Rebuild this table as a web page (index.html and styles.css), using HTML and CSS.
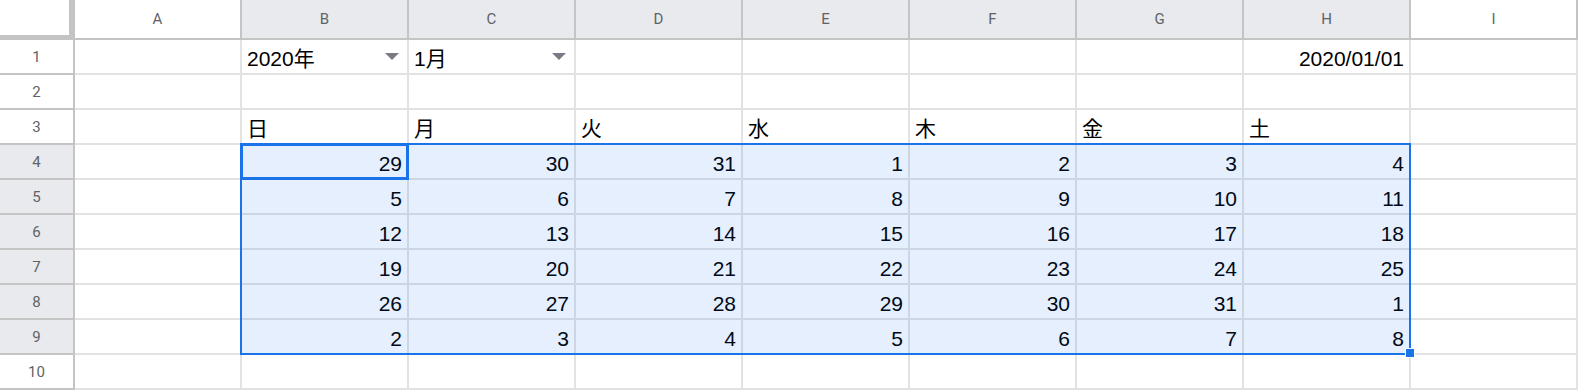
FILE: index.html
```html
<!DOCTYPE html>
<html lang="ja">
<head>
<meta charset="utf-8">
<title>Calendar sheet</title>
<link rel="stylesheet" href="styles.css">
</head>
<body>
<div class="sheet">
  <div class="corner"></div>
  <div class="ch">A</div>
  <div class="ch sel">B</div>
  <div class="ch sel">C</div>
  <div class="ch sel">D</div>
  <div class="ch sel">E</div>
  <div class="ch sel">F</div>
  <div class="ch sel">G</div>
  <div class="ch sel">H</div>
  <div class="ch">I</div>

  <div class="rh">1</div>
  <div class="c"></div>
  <div class="c dd"><span>2020年</span><i class="arrow"></i></div>
  <div class="c dd"><span>1月</span><i class="arrow"></i></div>
  <div class="c"></div>
  <div class="c"></div>
  <div class="c"></div>
  <div class="c"></div>
  <div class="c num">2020/01/01</div>
  <div class="c"></div>

  <div class="rh">2</div>
  <div class="c"></div><div class="c"></div><div class="c"></div><div class="c"></div><div class="c"></div><div class="c"></div><div class="c"></div><div class="c"></div><div class="c"></div>

  <div class="rh">3</div>
  <div class="c"></div>
  <div class="c">日</div>
  <div class="c">月</div>
  <div class="c">火</div>
  <div class="c">水</div>
  <div class="c">木</div>
  <div class="c">金</div>
  <div class="c">土</div>
  <div class="c"></div>

  <div class="rh sel">4</div>
  <div class="c"></div>
  <div class="c num">29</div><div class="c num">30</div><div class="c num">31</div><div class="c num">1</div><div class="c num">2</div><div class="c num">3</div><div class="c num">4</div>
  <div class="c"></div>

  <div class="rh sel">5</div>
  <div class="c"></div>
  <div class="c num">5</div><div class="c num">6</div><div class="c num">7</div><div class="c num">8</div><div class="c num">9</div><div class="c num">10</div><div class="c num">11</div>
  <div class="c"></div>

  <div class="rh sel">6</div>
  <div class="c"></div>
  <div class="c num">12</div><div class="c num">13</div><div class="c num">14</div><div class="c num">15</div><div class="c num">16</div><div class="c num">17</div><div class="c num">18</div>
  <div class="c"></div>

  <div class="rh sel">7</div>
  <div class="c"></div>
  <div class="c num">19</div><div class="c num">20</div><div class="c num">21</div><div class="c num">22</div><div class="c num">23</div><div class="c num">24</div><div class="c num">25</div>
  <div class="c"></div>

  <div class="rh sel">8</div>
  <div class="c"></div>
  <div class="c num">26</div><div class="c num">27</div><div class="c num">28</div><div class="c num">29</div><div class="c num">30</div><div class="c num">31</div><div class="c num">1</div>
  <div class="c"></div>

  <div class="rh sel">9</div>
  <div class="c"></div>
  <div class="c num">2</div><div class="c num">3</div><div class="c num">4</div><div class="c num">5</div><div class="c num">6</div><div class="c num">7</div><div class="c num">8</div>
  <div class="c"></div>

  <div class="rh">10</div>
  <div class="c"></div><div class="c"></div><div class="c"></div><div class="c"></div><div class="c"></div><div class="c"></div><div class="c"></div><div class="c"></div><div class="c"></div>

  <div class="range"></div>
  <div class="active"></div>
  <div class="handle"></div>
</div>
</body>
</html>
```

FILE: styles.css
```css
* { box-sizing: border-box; }

html, body {
  margin: 0;
  padding: 0;
  background: #ffffff;
  overflow: hidden;
}

.sheet {
  position: relative;
  display: grid;
  grid-template-columns: 75px repeat(9, 167px);
  grid-template-rows: 40px repeat(10, 35px);
  font-family: "Liberation Sans", "Noto Sans CJK JP", sans-serif;
  font-size: 21px;
  color: #000000;
}

.corner {
  background: #ffffff;
  border-right: 6px solid #c4c4c4;
  border-bottom: 5px solid #c4c4c4;
}

.ch {
  display: flex;
  align-items: center;
  justify-content: center;
  font-family: Roboto, "Liberation Sans", sans-serif;
  font-size: 15px;
  color: #5f6368;
  background: #ffffff;
  border-right: 2px solid #c4c4c4;
  border-bottom: 2px solid #c4c4c4;
  padding-bottom: 1px;
}

.ch.sel { background: #e8eaed; }

.rh {
  display: flex;
  align-items: center;
  justify-content: center;
  font-family: Roboto, "Liberation Sans", sans-serif;
  font-size: 15px;
  color: #5f6368;
  background: #ffffff;
  border-right: 2px solid #c4c4c4;
  border-bottom: 2px solid #c4c4c4;
}

.rh.sel { background: #e8eaed; }

.c {
  display: flex;
  align-items: flex-end;
  padding: 0 5px 2px 5px;
  border-right: 2px solid #e2e2e2;
  border-bottom: 2px solid #e2e2e2;
  white-space: nowrap;
  overflow: hidden;
  line-height: 24px;
}

.num { justify-content: flex-end; }

.dd {
  justify-content: space-between;
  padding-right: 8px;
}

.arrow {
  display: block;
  width: 0;
  height: 0;
  border-left: 7px solid transparent;
  border-right: 7px solid transparent;
  border-top: 7px solid #7b7b85;
  margin-bottom: 11px;
}

.range {
  position: absolute;
  left: 240px;
  top: 143px;
  width: 1171px;
  height: 212px;
  border: 2px solid #1a73e8;
  background: rgba(14, 101, 235, 0.1);
}

.active {
  position: absolute;
  left: 240px;
  top: 143px;
  width: 169px;
  height: 37px;
  border: 3px solid #1a73e8;
}

.handle {
  position: absolute;
  left: 1405px;
  top: 348px;
  width: 10px;
  height: 10px;
  background: #1a73e8;
  border: 1px solid #ffffff;
}
```
